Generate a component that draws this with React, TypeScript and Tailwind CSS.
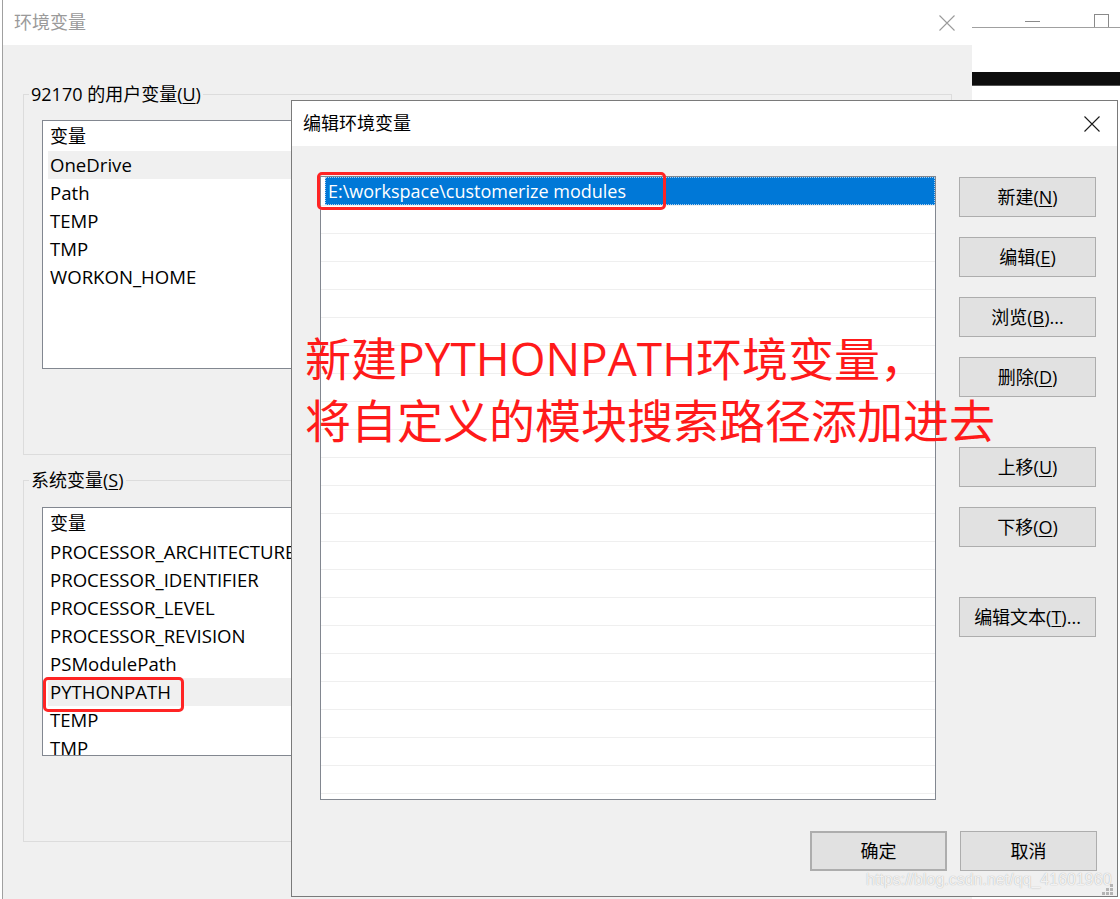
import React from 'react'

const userVars = ['OneDrive', 'Path', 'TEMP', 'TMP', 'WORKON_HOME']
const sysVars = [
  'PROCESSOR_ARCHITECTURE',
  'PROCESSOR_IDENTIFIER',
  'PROCESSOR_LEVEL',
  'PROCESSOR_REVISION',
  'PSModulePath',
  'PYTHONPATH',
  'TEMP',
  'TMP',
]

function CloseIcon({ color }: { color: string }) {
  return (
    <svg width="16" height="16" viewBox="0 0 16 16" fill="none">
      <path d="M0.5 0.5L15.5 15.5M15.5 0.5L0.5 15.5" stroke={color} strokeWidth="1.1" />
    </svg>
  )
}

function Key({ k }: { k: string }) {
  return <span className="underline underline-offset-2">{k}</span>
}

function VarList({ rows, selected, top }: { rows: string[]; selected: string; top: string }) {
  return (
    <div className={`ml-[18px] ${top} w-[890px] h-[249px] border border-[#828790] bg-white overflow-hidden text-[18.6px]`}>
      <div className="h-[30px] flex items-center pl-[7px] text-[18px]">变量</div>
      {rows.map((r) => (
        <div
          key={r}
          className={`h-[28px] ml-[5px] pl-[2px] flex items-center whitespace-nowrap ${r === selected ? 'bg-[#f0f0f0]' : ''}`}
        >
          {r}
        </div>
      ))}
    </div>
  )
}

function Btn({ children, className = '' }: { children: React.ReactNode; className?: string }) {
  return (
    <div
      className={`w-[137px] h-[40px] shrink-0 flex items-center justify-center bg-[#e1e1e1] border border-[#adadad] text-black ${className}`}
    >
      {children}
    </div>
  )
}

export default function App() {
  const pathRows = Array.from({ length: 23 }, (_, i) => i)

  return (
    <div className="relative w-[1120px] h-[899px] overflow-hidden bg-white text-[18px] text-black font-['Open_Sans','Noto_Sans_CJK_SC',sans-serif]">
      {/* window behind, right edge */}
      <div className="absolute left-[971px] top-0 right-0 h-full bg-white border-l border-[#a0a0a0]">
        <div className="h-[28px] flex items-end border-b border-[#a0a0a0] pl-[53px]">
          <div className="w-[15px] h-px bg-[#8a8a8a] mb-[5px]" />
          <div className="ml-[54px] w-[15px] h-[13px] border border-b-0 border-[#8a8a8a]" />
        </div>
        <div className="mt-[44px] h-[14px] bg-[#0d0d0d] border-b border-[#555]" />
      </div>

      {/* 环境变量 window */}
      <div className="absolute left-[2px] top-0 w-[970px] h-[920px] border-l border-[#a0a0a0] bg-[#f0f0f0]">
        <div className="h-[45px] bg-white flex items-center justify-between pl-[11px] pr-[17px]">
          <span className="text-[#9a9a9a]">环境变量</span>
          <CloseIcon color="#9a9a9a" />
        </div>
        <div className="pl-[20px] pt-[37px]">
          <fieldset className="w-[929px] border border-[#dcdcdc] pb-[85px]">
            <legend className="ml-[5px] px-[2px] leading-[24px]">
              92170 的用户变量(<Key k="U" />)
            </legend>
            <VarList rows={userVars} selected="OneDrive" top="mt-[14px]" />
          </fieldset>
          <fieldset className="mt-[13px] w-[929px] border border-[#dcdcdc] pb-[85px]">
            <legend className="ml-[5px] px-[2px] leading-[24px]">
              系统变量(<Key k="S" />)
            </legend>
            <VarList rows={sysVars} selected="PYTHONPATH" top="mt-[15px]" />
          </fieldset>
        </div>
      </div>

      {/* 编辑环境变量 dialog */}
      <div className="absolute left-[291px] top-[100px] w-[827px] h-[797px] border border-[#7a7a7a] bg-[#f0f0f0] flex flex-col">
        <div className="h-[45px] shrink-0 bg-white flex items-center justify-between pl-[11px] pr-[17px]">
          <span>编辑环境变量</span>
          <CloseIcon color="#1a1a1a" />
        </div>
        <div className="flex flex-col pl-[28px] pt-[30px]">
          <div className="flex gap-[23px]">
            <div className="w-[616px] h-[624px] border border-[#828790] bg-white overflow-hidden">
              {pathRows.map((i) => (
                <div key={i} className={`h-[28px] ${i > 0 ? 'border-t border-[#efefef]' : ''}`}>
                  {i === 0 && (
                    <div className="ml-[4px] h-[28px] pl-[3px] flex items-center bg-[#0078d7] text-white outline-1 outline-dotted outline-[#a8d0f2] -outline-offset-1">
                      E:\workspace\customerize modules
                    </div>
                  )}
                </div>
              ))}
            </div>
            <div className="flex flex-col pt-[1px]">
              <Btn>新建(<Key k="N" />)</Btn>
              <Btn className="mt-[20px]">编辑(<Key k="E" />)</Btn>
              <Btn className="mt-[20px]">浏览(<Key k="B" />)...</Btn>
              <Btn className="mt-[20px]">删除(<Key k="D" />)</Btn>
              <Btn className="mt-[50px]">上移(<Key k="U" />)</Btn>
              <Btn className="mt-[20px]">下移(<Key k="O" />)</Btn>
              <Btn className="mt-[50px]">编辑文本(<Key k="T" />)...</Btn>
            </div>
          </div>
          <div className="flex gap-[13px] mt-[31px] pl-[490px]">
            <Btn className="border-2 border-[#0078d7]">确定</Btn>
            <Btn>取消</Btn>
          </div>
        </div>
      </div>

      {/* red annotations */}
      <div className="absolute left-[317px] top-[172px] w-[349px] h-[38px] border-[3px] border-[#ff2424] rounded-[5px]" />
      <div className="absolute left-[43px] top-[677px] w-[141px] h-[35px] border-[3px] border-[#ff2424] rounded-[5px]" />
      <div className="absolute left-[305px] top-[327px] text-[46px] leading-[62px] text-[#ff1a1a] whitespace-nowrap">
        <div>新建PYTHONPATH环境变量，</div>
        <div>将自定义的模块搜索路径添加进去</div>
      </div>

      {/* watermark + grip */}
      <div className="absolute left-[866px] top-[868px] text-[16px] text-white/85 font-['Liberation_Sans',sans-serif] [text-shadow:0_0_1px_#9a9a9a]">
        https://blog.csdn.net/qq_41601960
      </div>
      <svg className="absolute left-[1102px] top-[884px]" width="11" height="11" viewBox="0 0 11 11">
        <g fill="#b4b4b4">
          <rect x="8" y="0" width="3" height="3" />
          <rect x="4" y="4" width="3" height="3" />
          <rect x="8" y="4" width="3" height="3" />
          <rect x="0" y="8" width="3" height="3" />
          <rect x="4" y="8" width="3" height="3" />
          <rect x="8" y="8" width="3" height="3" />
        </g>
      </svg>
    </div>
  )
}
